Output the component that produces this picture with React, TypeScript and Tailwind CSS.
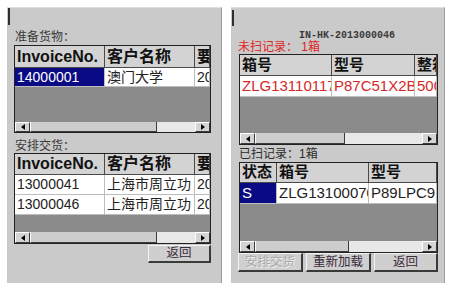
import React from "react";

const SANS = "font-['Liberation_Sans','Noto_Sans_CJK_SC',sans-serif]";

function Arrow({ right }: { right?: boolean }) {
  return (
    <div className="w-[15px] h-full shrink-0 bg-[#d4d4d4] border border-t-white border-l-white border-r-[#3a3a3a] border-b-[#3a3a3a] flex items-center justify-center">
      <svg width="4" height="6" viewBox="0 0 4 6">
        <path d={right ? "M0 0L4 3L0 6Z" : "M4 0L0 3L4 6Z"} fill="#000" />
      </svg>
    </div>
  );
}

function HScroll({ h, thumb }: { h: string; thumb: string }) {
  return (
    <div className={`flex shrink-0 bg-[#e8e8e8] ${h}`}>
      <Arrow />
      <div className={`h-full shrink-0 bg-[#cdcdcd] border-l border-l-white border-r border-r-[#3a3a3a] border-b border-b-[#3a3a3a] ${thumb}`} />
      <div className="flex-1" />
      <Arrow right />
    </div>
  );
}

function HeadCell({ w, children, flex }: { w?: string; children: React.ReactNode; flex?: boolean }) {
  return (
    <div
      className={`${flex ? "flex-1 min-w-0" : `${w} shrink-0`} h-full overflow-hidden whitespace-nowrap bg-[#d3d3d3] border-r border-r-[#4a4a4a] border-b border-b-[#4a4a4a] pl-[2px] flex items-center font-bold text-[#111]`}
    >
      {children}
    </div>
  );
}

function Cell({
  w,
  children,
  flex,
  sel,
  cls = "",
}: {
  w?: string;
  children: React.ReactNode;
  flex?: boolean;
  sel?: boolean;
  cls?: string;
}) {
  return (
    <div
      className={`${flex ? "flex-1 min-w-0" : `${w} shrink-0`} h-full overflow-hidden whitespace-nowrap border-r border-r-[#bdbdbd] border-b border-b-[#bdbdbd] pl-[2px] flex items-center ${
        sel ? "bg-[#0a0a84] text-white" : "bg-white"
      } ${cls}`}
    >
      {children}
    </div>
  );
}

function Btn({ w, children, disabled }: { w: string; children: React.ReactNode; disabled?: boolean }) {
  return (
    <div
      className={`${w} h-full shrink-0 bg-[#cfcfcf] border border-t-[#f4f4f4] border-l-[#f4f4f4] border-r-[#3a3a3a] border-b-[#3a3a3a] border-r-2 border-b-2 flex items-center justify-center text-[12.5px] ${
        disabled ? "text-[#a9a9a9] [text-shadow:1px_1px_0_#f2f2f2]" : "text-[#3a2a3a]"
      }`}
    >
      {children}
    </div>
  );
}

export default function App() {
  return (
    <div className={`w-[452px] h-[292px] bg-white flex pt-[7px] pl-[7px] gap-[9px] ${SANS}`}>
      {/* Left panel */}
      <div className="flex flex-col w-[215px] h-[276px] bg-[#cacacb] border-r border-r-[#9c9c9c] border-t border-t-[#dedede]">
        <div className="ml-[1px] w-[2px] h-[17px] bg-[#2e2e2e] shrink-0" />
        <div className="ml-[8px] mt-[6px] h-[13px] leading-[13px] text-[12px] text-[#3a3a3a] shrink-0">准备货物：</div>
        <div className="ml-[7px] mt-[1px] w-[197px] h-[88px] border border-[#222] flex flex-col bg-[#8b8b8b] shrink-0">
          <div className="flex h-[22px] text-[16px] shrink-0">
            <HeadCell w="w-[90px]">InvoiceNo.</HeadCell>
            <HeadCell w="w-[90px]">客户名称</HeadCell>
            <HeadCell flex>要求日期</HeadCell>
          </div>
          <div className="flex h-[19px] text-[14px] text-[#222] shrink-0">
            <Cell w="w-[90px]" sel>14000001</Cell>
            <Cell w="w-[90px]">澳门大学</Cell>
            <Cell flex>2013-11-20</Cell>
          </div>
          <div className="flex-1" />
          <HScroll h="h-[10px]" thumb="w-[127px]" />
        </div>
        <div className="ml-[8px] mt-[7px] h-[13px] leading-[13px] text-[12px] text-[#3a3a3a] shrink-0">安排交货：</div>
        <div className="ml-[7px] w-[197px] h-[91px] border border-[#222] flex flex-col bg-[#8b8b8b] shrink-0">
          <div className="flex h-[21px] text-[16px] shrink-0">
            <HeadCell w="w-[90px]">InvoiceNo.</HeadCell>
            <HeadCell w="w-[90px]">客户名称</HeadCell>
            <HeadCell flex>要求日期</HeadCell>
          </div>
          <div className="flex h-[20px] text-[14px] text-[#222] shrink-0">
            <Cell w="w-[90px]">13000041</Cell>
            <Cell w="w-[90px]">上海市周立功</Cell>
            <Cell flex>2013-11-20</Cell>
          </div>
          <div className="flex h-[20px] text-[14px] text-[#222] shrink-0">
            <Cell w="w-[90px]">13000046</Cell>
            <Cell w="w-[90px]">上海市周立功</Cell>
            <Cell flex>2013-11-20</Cell>
          </div>
          <div className="flex-1" />
          <HScroll h="h-[11px]" thumb="w-[127px]" />
        </div>
        <div className="ml-[141px] mt-[1px] h-[18px] flex shrink-0">
          <Btn w="w-[63px]">返回</Btn>
        </div>
      </div>

      {/* Right panel */}
      <div className="flex flex-col w-[214px] h-[276px] bg-[#cacacb] border-r border-r-[#9c9c9c] border-t border-t-[#dedede]">
        <div className="ml-[1px] mt-[2px] w-[2px] h-[16px] bg-[#2e2e2e] shrink-0" />
        <div className="ml-[68px] mt-[4px] h-[11px] leading-[11px] text-[10px] font-bold text-[#3a3a3a] font-['Liberation_Mono',monospace] shrink-0">
          IN-HK-2013000046
        </div>
        <div className="ml-[7px] h-[12px] leading-[12px] text-[12px] text-[#e02424] shrink-0">未扫记录： 1箱</div>
        <div className="ml-[8px] mt-[1px] w-[199px] h-[91px] border border-[#222] flex flex-col bg-[#8b8b8b] shrink-0">
          <div className="flex h-[21px] text-[15px] shrink-0">
            <HeadCell w="w-[92px]">箱号</HeadCell>
            <HeadCell w="w-[83px]">型号</HeadCell>
            <HeadCell flex>整箱数</HeadCell>
          </div>
          <div className="flex h-[21px] text-[15px] text-[#d42828] shrink-0">
            <Cell w="w-[92px]">ZLG13110117</Cell>
            <Cell w="w-[83px]">P87C51X2BN</Cell>
            <Cell flex>500</Cell>
          </div>
          <div className="flex-1" />
          <HScroll h="h-[11px]" thumb="w-[90px]" />
        </div>
        <div className="ml-[8px] mt-[3px] h-[13px] leading-[13px] text-[12px] text-[#2a2a2a] shrink-0">已扫记录：1箱</div>
        <div className="ml-[8px] mt-[1px] w-[199px] h-[91px] border border-[#222] flex flex-col bg-[#8b8b8b] shrink-0">
          <div className="flex h-[20px] text-[15px] shrink-0">
            <HeadCell w="w-[37px]">状态</HeadCell>
            <HeadCell w="w-[92px]">箱号</HeadCell>
            <HeadCell flex>型号</HeadCell>
          </div>
          <div className="flex h-[21px] text-[15px] text-[#222] shrink-0">
            <Cell w="w-[37px]" sel>S</Cell>
            <Cell w="w-[92px]">ZLG13100070</Cell>
            <Cell flex>P89LPC922</Cell>
          </div>
          <div className="flex-1" />
          <HScroll h="h-[11px]" thumb="w-[94px]" />
        </div>
        <div className="ml-[7px] h-[19px] flex gap-[3px] shrink-0">
          <Btn w="w-[65px]" disabled>安排交货</Btn>
          <Btn w="w-[65px]">重新加载</Btn>
          <Btn w="w-[64px]">返回</Btn>
        </div>
      </div>
    </div>
  );
}
